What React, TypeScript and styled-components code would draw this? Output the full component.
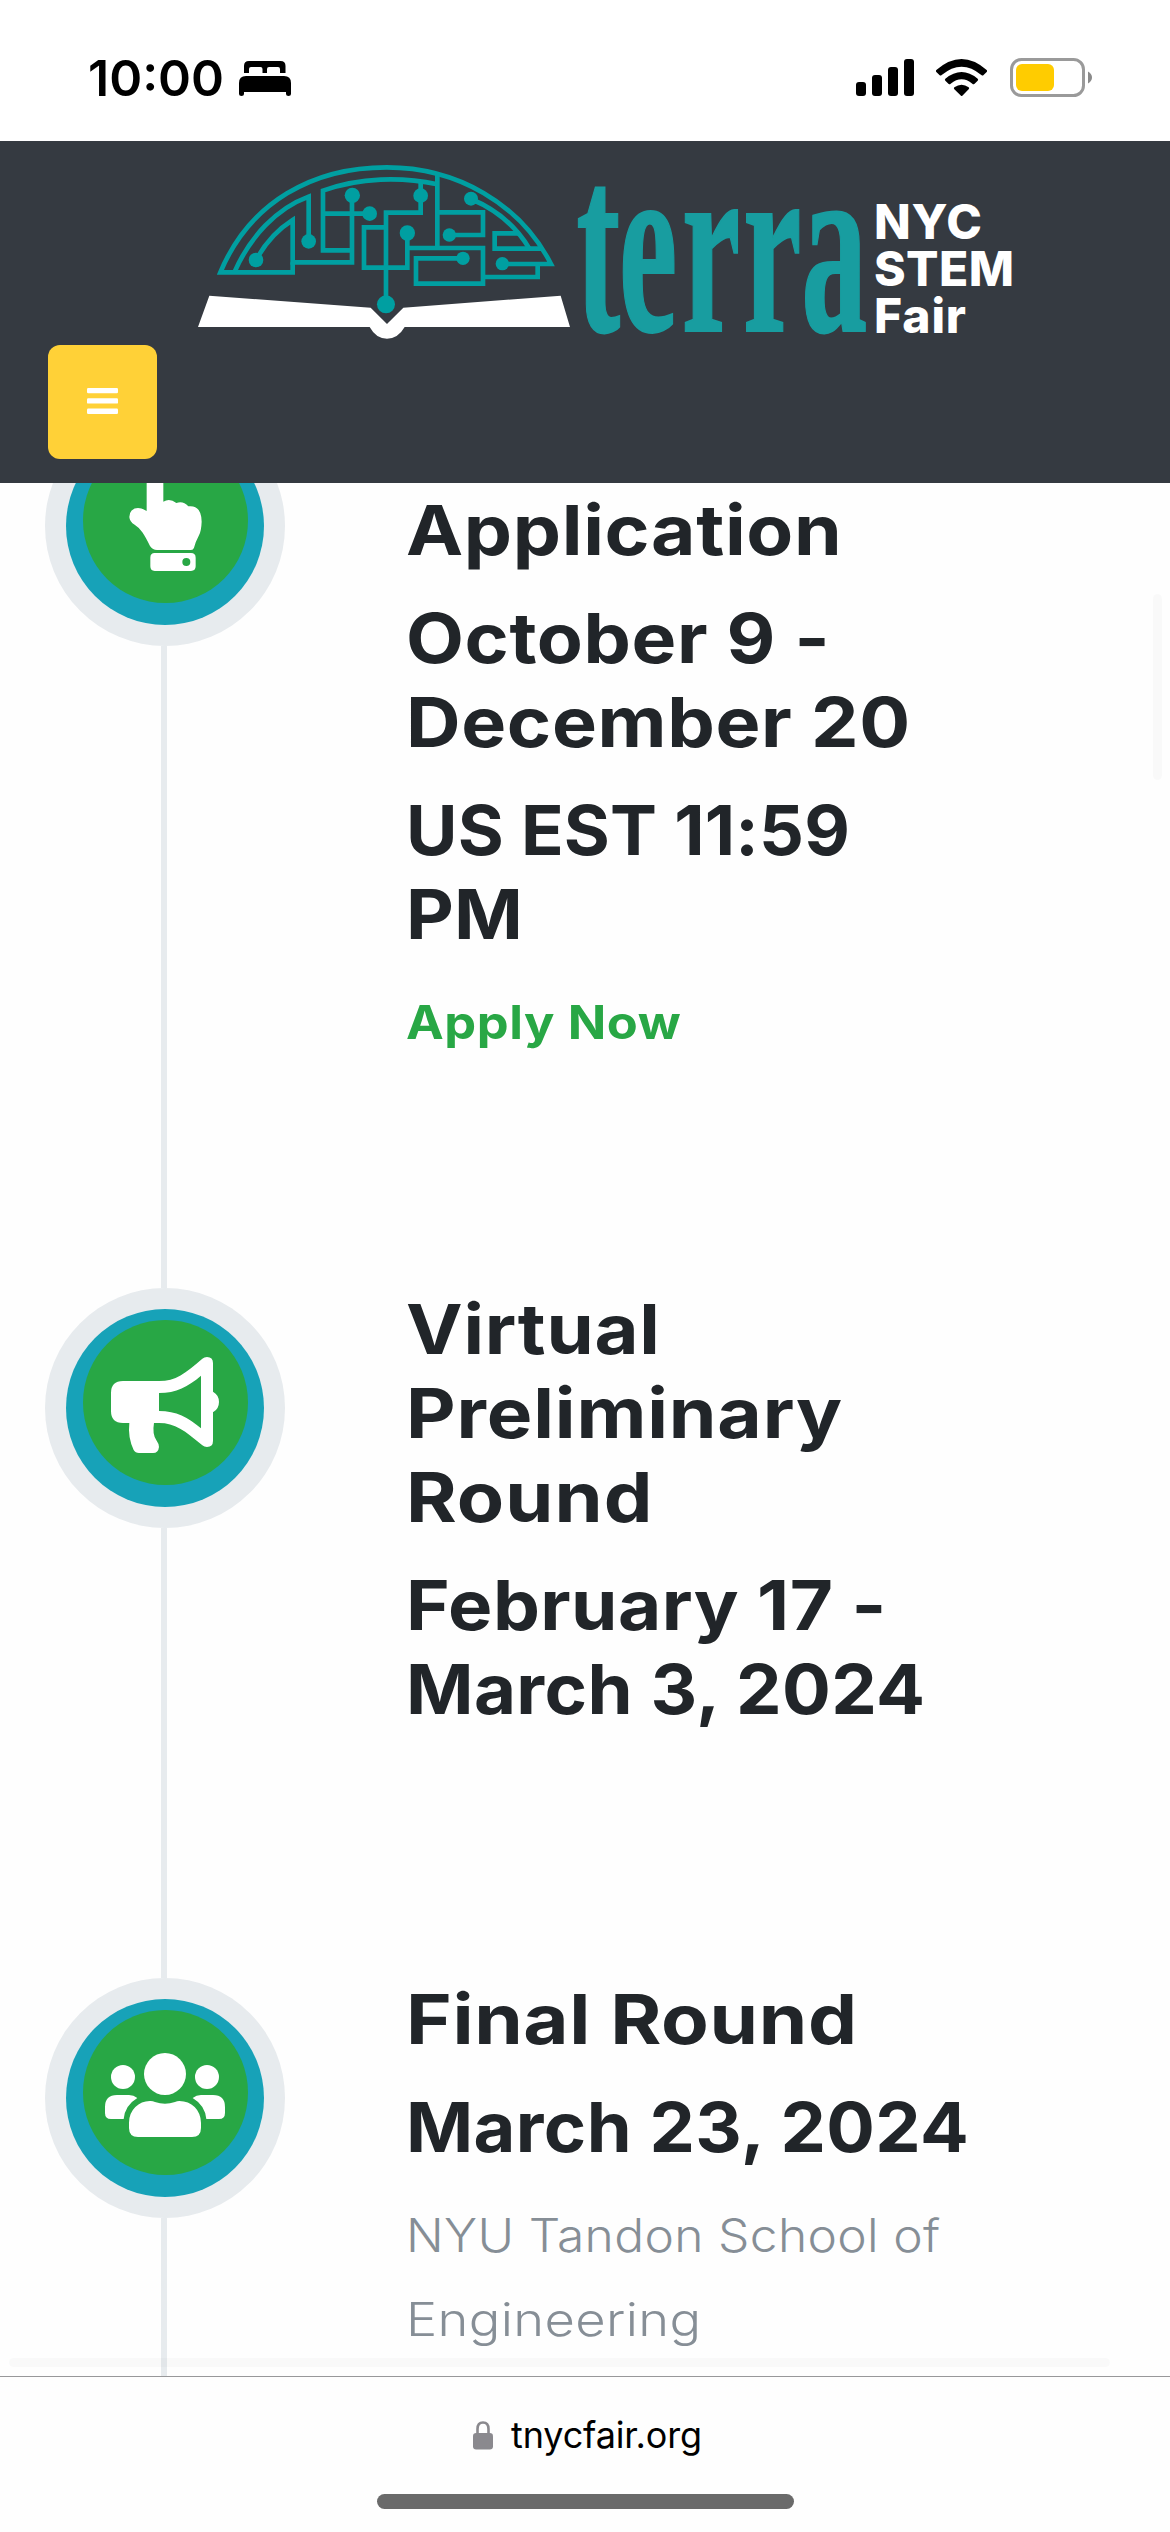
import React from "react";
import styled, { createGlobalStyle } from "styled-components";

const GlobalStyle = createGlobalStyle`
  * { box-sizing: border-box; }
  body { margin: 0; background: #fefefe; }
`;

const sans = `Inter, "Liberation Sans", sans-serif`;

const Screen = styled.div`
  position: relative;
  display: flex;
  flex-direction: column;
  width: 1170px;
  height: 2532px;
  overflow: hidden;
  background: #fefefe;
  font-family: ${sans};
`;

const StatusBar = styled.div`
  display: flex;
  flex: none;
  justify-content: space-between;
  align-items: flex-start;
  height: 141px;
  padding: 57px 78px 0 88px;
  background: #fff;
`;

const StatusGroup = styled.div<{ $gap: number }>`
  display: flex;
  align-items: flex-start;
  gap: ${(p) => p.$gap}px;
  height: 42px;
`;

const Clock = styled.span`
  font-size: 50px;
  font-weight: 600;
  line-height: 42px;
  color: #000;
`;

const Glyph = styled.svg`
  display: block;
  flex: none;
`;

const IconNudge = styled.div<{ $top: number }>`
  padding-top: ${(p) => p.$top}px;
`;

const SiteHeader = styled.header`
  display: flex;
  flex: none;
  flex-direction: column;
  align-items: flex-start;
  height: 342px;
  padding: 19px 0 0 48px;
  background: #353a41;
`;

const Logo = styled.svg`
  display: block;
  margin-left: 142px;
  margin-bottom: 5px;
  overflow: visible;
`;

const MenuButton = styled.button`
  display: flex;
  align-items: center;
  justify-content: center;
  width: 109px;
  height: 114px;
  padding: 0 0 2px;
  border: 0;
  border-radius: 12px;
  background: #ffd137;
`;

const Timeline = styled.main`
  display: flex;
  flex: 1;
  flex-direction: column;
  min-height: 0;
  overflow: hidden;
`;

const Step = styled.section<{ $height: number; $first?: boolean }>`
  display: flex;
  flex: none;
  gap: 121px;
  height: ${(p) => p.$height}px;
  margin-top: ${(p) => (p.$first ? -77 : 0)}px;
  padding-left: 45px;
`;

const Rail = styled.div`
  display: flex;
  flex: none;
  flex-direction: column;
  width: 240px;
`;

const OuterRing = styled.div`
  flex: none;
  width: 240px;
  height: 240px;
  padding: 21px;
  border-radius: 50%;
  background: #e7ebee;
`;

const InnerRing = styled.div`
  width: 198px;
  height: 198px;
  padding: 11px 0 0 17px;
  border-radius: 50%;
  background: #17a2b8;
`;

const Disc = styled.div`
  width: 164.67px;
  height: 164.67px;
  overflow: hidden;
  border-radius: 50%;
  background: #28a745;
`;

const Connector = styled.div`
  flex: 1;
  width: 6px;
  margin-left: 116px;
  background: #e7ebee;
`;

const Details = styled.div<{ $top?: number }>`
  display: flex;
  flex-direction: column;
  gap: 24px;
  margin-top: -1px;
  padding-top: ${(p) => p.$top ?? 0}px;
`;

const Heading = styled.h4`
  margin: 0;
  font-size: 69px;
  font-weight: 700;
  line-height: 84px;
  color: #212529;
`;

const Venue = styled.p`
  margin: 0;
  font-size: 46px;
  font-weight: 300;
  line-height: 84px;
  color: #868e96;
`;

const ApplyLink = styled.a`
  font-size: 46px;
  font-weight: 700;
  line-height: 84px;
  color: #28a745;
  text-decoration: none;
`;

const Line = styled.span<{ $stretch: number; $track: number }>`
  display: block;
  width: max-content;
  white-space: nowrap;
  letter-spacing: ${(p) => p.$track}px;
  transform: scaleX(${(p) => p.$stretch});
  transform-origin: left;
`;

const ScrollShade = styled.div<{ $vertical?: boolean }>`
  position: absolute;
  left: ${(p) => (p.$vertical ? 1153 : 9)}px;
  top: ${(p) => (p.$vertical ? 594 : 2358)}px;
  width: ${(p) => (p.$vertical ? 9 : 1101)}px;
  height: ${(p) => (p.$vertical ? 186 : 9)}px;
  border-radius: 5px;
  background: rgba(0, 0, 0, 0.02);
`;

const AddressBar = styled.footer`
  display: flex;
  flex: none;
  flex-direction: column;
  align-items: center;
  height: 156px;
  padding-top: 36px;
  border-top: 1px solid #98989a;
  background: #fefefe;
`;

const Address = styled.div`
  display: flex;
  align-items: center;
  gap: 18px;
  height: 44px;
  padding-left: 5px;
  font-size: 36px;
  line-height: 44px;
  letter-spacing: -0.15px;
  color: #000;
`;

const HomeIndicator = styled.div`
  width: 417px;
  height: 15px;
  margin-top: 37px;
  border-radius: 8px;
  background: #6a6a6a;
`;

const BedIcon = () => (
  <Glyph width="52" height="36" viewBox="0 0 52 36">
    <path d="M5 12V5Q5 0 10 0H41.500Q46.500 0 46.500 5V12H41V8Q41 6 39 6H30Q28 6 28 8V12H23.500V8Q23.500 6 21.500 6H12Q10 6 10 8V12Z" />
    <path d="M0 33V22Q0 15 7 15H45Q52 15 52 22V33Q52 35 49.500 35Q47 35 47 33V31H5V33Q5 35 2.500 35Q0 35 0 33Z" />
  </Glyph>
);

const SignalIcon = () => (
  <Glyph width="58" height="39" viewBox="0 0 58 39">
    <rect x="0" y="25" width="10" height="14" rx="3" />
    <rect x="16" y="18" width="10" height="21" rx="3" />
    <rect x="32" y="10" width="10" height="29" rx="3" />
    <rect x="48" y="2" width="10" height="37" rx="3" />
  </Glyph>
);

const WifiIcon = () => (
  <Glyph width="51" height="39" viewBox="0 0 153 117">
    <path d="M1 33Q77-33 152 33Q155 36 152 39L142 49Q140 51 136 48Q77-2 17 48Q14 51 11 49L1 39Q-2 36 1 33Z" />
    <path d="M28 59Q77 19 125 59Q128 62 125 65L115 75Q112 77 109 74Q77 48 44 74Q41 77 38 75L28 65Q25 62 28 59Z" />
    <path d="M55 85Q77 70 98 85Q101 88 98 91L79 110Q77 112 75 110L55 91Q52 88 55 85Z" />
  </Glyph>
);

const BatteryIcon = () => (
  <Glyph width="83" height="40" viewBox="0 0 83 40">
    <rect x="2.500" y="2.500" width="72" height="36" rx="10" fill="none" stroke="#9a9a9a" strokeWidth="3" />
    <rect x="7" y="7" width="38" height="27" rx="6" fill="#ffcc00" />
    <path d="M79 14.500Q83 17 83 20.500T79 26.500Z" fill="#8a8a8a" />
  </Glyph>
);

const MenuIcon = () => (
  <Glyph width="31" height="26" viewBox="0 0 31 26" fill="#fff">
    <rect width="31" height="5.300" rx="1.200" />
    <rect y="10.300" width="31" height="5.300" rx="1.200" />
    <rect y="20.600" width="31" height="5.300" rx="1.200" />
  </Glyph>
);

const HandIcon = () => (
  <Glyph width="164.670" height="164.670" viewBox="248 354 494 494" fill="#fff">
    <path d="M439 573V460Q439 435 464 435T489 460V545Q508 533 528 549Q548 541 564 559Q603 554 604 605Q603 632 596 646Q585 667 581 683Q579 690 572 690H470Q457 690 449 678Q435 650 426 637Q415 621 403 614Q388 606 387 591Q388 565 413 564Q425 564 439 573Z" />
    <path
      fillRule="evenodd"
      d="M463 699H572Q586 699 586 713V739Q586 753 572 753H463Q450 753 450 739V713Q450 699 463 699ZM570 726A12 12 0 1 0 546 726A12 12 0 1 0 570 726Z"
    />
  </Glyph>
);

const MegaphoneIcon = () => (
  <Glyph width="164.670" height="164.670" viewBox="189 180 494 494" fill="#fff">
    <path
      fillRule="evenodd"
      d="M309 363H417C468 363 495 340 547 296Q553 291 561 291Q579 291 579 309V395Q597 405 597 426T579 457V543Q579 561 561 561Q553 561 547 556C495 512 465 489 417 489H402Q396 524 410 542Q417 551 417 561Q415 579 399 579H357Q346 579 341 570Q323 532 328 489H309Q273 489 273 453V399Q273 363 309 363ZM417 399V453C469 453 504 472 543 505V347C504 380 469 399 417 399Z"
    />
  </Glyph>
);

const PeopleIcon = () => (
  <Glyph width="164.670" height="164.670" viewBox="189 180 494 494" fill="#fff">
    <circle cx="435" cy="372" r="63" />
    <circle cx="309" cy="381" r="36" />
    <circle cx="561" cy="381" r="36" />
    <path d="M291 435H327Q341 435 352 444Q315 466 311 507H273Q255 507 255 489V471Q255 435 291 435Z" />
    <path d="M579 435H543Q529 435 518 444Q555 466 559 507H597Q615 507 615 489V471Q615 435 579 435Z" />
    <path d="M392 453Q399 453 405 456Q435 466 465 456Q471 453 478 453Q506 453 524 471T543 518V534Q543 561 516 561H354Q327 561 327 534V518Q327 490 346 471T392 453Z" />
  </Glyph>
);

const LockIcon = () => (
  <Glyph width="20" height="29" viewBox="0 0 20 29">
    <path d="M4.500 14V8Q4.500 1.500 10 1.500T15.500 8V14" fill="none" stroke="#8a898e" strokeWidth="2.600" />
    <rect y="12" width="20" height="16.500" rx="3.200" fill="#8a898e" />
  </Glyph>
);

const TerraLogo = () => (
  <Logo width="830" height="180" viewBox="190 160 830 180">
    <g transform="translate(180 140) scale(0.33333)">
      <g fill="none" stroke="#009fa1" strokeWidth="14" strokeMiterlimit="10">
        <path d="M338 367V397H121C210 185 400 82 620 82C830 82 1020 190 1113 372H967" />
        <path d="M163 397C210 290 290 205 386 170V304" />
        <path d="M228 360Q270 283 338 240V367H516V165" />
        <path d="M516 331H429V152C540 112 665 110 772 133" />
        <path d="M429 221H568" />
        <path d="M722 122V218H618V492" />
        <path d="M618 262H552V383H682V280" />
        <path d="M772 98V324" />
        <path d="M772 217H909V285H808" />
        <path d="M682 324H909V431H708V355H848" />
        <path d="M909 411H1073V372" />
        <path d="M873 177C950 209 1010 262 1048 326" />
        <path d="M1015 280H944V326H1085" />
      </g>
      <g fill="#009fa1">
        <circle cx="228" cy="360" r="22" />
        <circle cx="386" cy="304" r="22" />
        <circle cx="517" cy="166" r="23" />
        <circle cx="569" cy="221" r="22" />
        <circle cx="722" cy="167" r="22" />
        <circle cx="682" cy="279" r="23" />
        <circle cx="873" cy="176" r="21" />
        <circle cx="808" cy="285" r="20" />
        <circle cx="849" cy="355" r="20" />
        <circle cx="967" cy="371" r="20" />
        <circle cx="618" cy="493" r="27" />
      </g>
      <path
        fill="#fff"
        d="M88 467L572 503L621 552L670 503L1142 467L1170 561H674Q654 596 621 596T569 561H54Z"
      />
    </g>
    <text
      transform="scale(0.52 1)"
      x="1108 1190 1311 1429 1541"
      y="331"
      fill="#189da0"
      stroke="#189da0"
      strokeWidth="2"
      fontFamily="'Liberation Serif', serif"
      fontSize="254"
      fontWeight="700"
    >
      terra
    </text>
    <g fill="#fff" fontFamily={sans} fontSize="48" fontWeight="800">
      <text x="874" y="239" textLength="108">NYC</text>
      <text x="874" y="286" textLength="140">STEM</text>
      <text x="874" y="333" textLength="92">Fair</text>
    </g>
  </Logo>
);

interface StepMarkerProps {
  icon: React.ReactNode;
}

const StepMarker = ({ icon }: StepMarkerProps) => (
  <Rail>
    <OuterRing>
      <InnerRing>
        <Disc>{icon}</Disc>
      </InnerRing>
    </OuterRing>
    <Connector />
  </Rail>
);

export default function App() {
  return (
    <Screen>
      <GlobalStyle />
      <StatusBar>
        <StatusGroup $gap={15}>
          <Clock>10:00</Clock>
          <IconNudge $top={4}>
            <BedIcon />
          </IconNudge>
        </StatusGroup>
        <StatusGroup $gap={22}>
          <SignalIcon />
          <IconNudge $top={2}>
            <WifiIcon />
          </IconNudge>
          <BatteryIcon />
        </StatusGroup>
      </StatusBar>

      <SiteHeader>
        <TerraLogo />
        <MenuButton aria-label="Menu">
          <MenuIcon />
        </MenuButton>
      </SiteHeader>

      <Timeline>
        <Step $height={882} $first>
          <StepMarker icon={<HandIcon />} />
          <Details $top={83}>
            <Heading>
              <Line $stretch={1.11} $track={0.6}>Application</Line>
            </Heading>
            <Heading>
              <Line $stretch={1.09} $track={0.55}>October 9 -</Line>
              <Line $stretch={1.095} $track={0.58}>December 20</Line>
            </Heading>
            <Heading>
              <Line $stretch={1.02} $track={0.2}>US EST 11:59</Line>
              <Line $stretch={1.07} $track={0.2}>PM</Line>
            </Heading>
            <ApplyLink>
              <Line $stretch={1.1} $track={0.52}>Apply Now</Line>
            </ApplyLink>
          </Details>
        </Step>

        <Step $height={690}>
          <StepMarker icon={<MegaphoneIcon />} />
          <Details>
            <Heading>
              <Line $stretch={1.1} $track={0.68}>Virtual</Line>
              <Line $stretch={1.11} $track={0.78}>Preliminary</Line>
              <Line $stretch={1.12} $track={0.95}>Round</Line>
            </Heading>
            <Heading>
              <Line $stretch={1.08} $track={0.42}>February 17 -</Line>
              <Line $stretch={1.05} $track={0.36}>March 3, 2024</Line>
            </Heading>
          </Details>
        </Step>

        <Step $height={690}>
          <StepMarker icon={<PeopleIcon />} />
          <Details>
            <Heading>
              <Line $stretch={1.13} $track={0.57}>Final Round</Line>
            </Heading>
            <Heading>
              <Line $stretch={1.045} $track={0.38}>March 23, 2024</Line>
            </Heading>
            <Venue>
              <Line $stretch={1.08} $track={0.31}>NYU Tandon School of</Line>
              <Line $stretch={1.14} $track={0.3}>Engineering</Line>
            </Venue>
          </Details>
        </Step>
      </Timeline>

      <AddressBar>
        <Address>
          <LockIcon />
          tnycfair.org
        </Address>
        <HomeIndicator />
      </AddressBar>

      <ScrollShade $vertical />
      <ScrollShade />
    </Screen>
  );
}
